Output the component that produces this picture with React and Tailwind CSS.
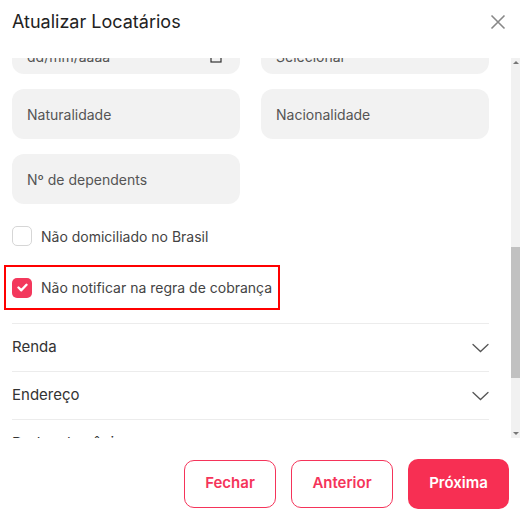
import React, {useLayoutEffect, useRef} from 'react';

const Field = ({placeholder, icon, low}) => (
  <div className={`h-[50px] rounded-xl bg-[#f2f2f2] flex justify-between px-[15px] text-[14px] text-[#555] ${low ? 'items-end pb-[7px]' : 'items-center'}`}>
    <span>{placeholder}</span>
    {icon}
  </div>
)

const CalendarIcon = () => (
  <svg width="12" height="12" viewBox="0 0 12 12" fill="none" stroke="#333" strokeWidth="1.2" className="mb-1 mr-[3px]">
    <rect x="1" y="1.5" width="10" height="9.5" />
    <path d="M1 4h10" />
  </svg>
)

const Chevron = () => (
  <svg width="17" height="10" viewBox="0 0 17 10" fill="none" stroke="#555" strokeWidth="1.3" strokeLinecap="round">
    <path d="M1 1.5l7.5 7 7.5-7" />
  </svg>
)

const Section = ({title}) => (
  <div className="h-[48px] border-t border-[#ececec] flex items-center justify-between text-[15px] text-[#333]">
    <span>{title}</span>
    <Chevron />
  </div>
)

const App = () => {
  const scrollRef = useRef(null)
  const anchorRef = useRef(null)

  useLayoutEffect(() => {
    if (scrollRef.current && anchorRef.current) {
      scrollRef.current.scrollTop = anchorRef.current.offsetTop - 31
    }
  }, [])

  const rows = [
    ['Tipo de pessoa', 'Código'],
    ['Nome completo', 'Nome social'],
    ['CPF', 'RG'],
    ['Órgão emissor', 'UF emissor'],
    ['Data de emissão', 'Sexo'],
    ['E-mail', 'Telefone'],
    ['Celular', 'Profissão'],
  ]

  return (
    <div className="w-[520px] h-[519px] bg-white flex flex-col font-['Inter',sans-serif]">
      <div className="h-[58px] flex items-start justify-between pl-3 pr-[14px] pt-[10px] shrink-0">
        <h2 className="text-[18px] leading-6 text-[#222]">Atualizar Locatários</h2>
        <button className="mt-[4px]">
          <svg width="16" height="16" viewBox="0 0 16 16" fill="none" stroke="#888" strokeWidth="1.6">
            <path d="M1.5 1.5l13 13M14.5 1.5l-13 13" />
          </svg>
        </button>
      </div>

      <div className="relative h-[380px] shrink-0">
        <div ref={scrollRef} className="h-full overflow-hidden pl-3 pr-[31px]">
          <div className="pt-4 flex flex-col gap-[15px]">
            {rows.map((r, i) => (
              <div key={i} className="grid grid-cols-2 gap-[21px]">
                <Field placeholder={r[0]} />
                <Field placeholder={r[1]} />
              </div>
            ))}
            <div className="grid grid-cols-2 gap-[21px]">
              <Field placeholder="dd/mm/aaaa" icon={<CalendarIcon />} low />
              <Field placeholder="Selecionar" low />
            </div>
            <div ref={anchorRef} className="grid grid-cols-2 gap-[21px]">
              <Field placeholder="Naturalidade" />
              <Field placeholder="Nacionalidade" />
            </div>
            <div className="grid grid-cols-2 gap-[21px]">
              <Field placeholder="Nº de dependents" />
            </div>
          </div>

          <label className="mt-[22px] flex items-center gap-[9px] text-[14px] text-[#444] h-5">
            <span className="w-5 h-5 rounded-[5px] border border-[#d6d6d6] bg-white"></span>
            Não domiciliado no Brasil
          </label>

          <div className="mt-[19px] -ml-2 w-[276px] h-[45px] border-2 border-[#ff0000] flex items-center pl-[6px]">
            <label className="flex items-center gap-[9px] text-[14px] text-[#444]">
              <span className="w-5 h-5 rounded-[5px] bg-[#f3385c] flex items-center justify-center">
                <svg width="11" height="9" viewBox="0 0 11 9" fill="none" stroke="white" strokeWidth="2.4" strokeLinecap="round" strokeLinejoin="round">
                  <path d="M1.5 4.5l2.8 2.8L9.5 1.8" />
                </svg>
              </span>
              Não notificar na regra de cobrança
            </label>
          </div>

          <div className="mt-[13px]">
            <Section title="Renda" />
            <Section title="Endereço" />
            <Section title="Dados do cônjuge" />
            <Section title="Contato" />
            <Section title="Documentos" />
          </div>
          <div className="h-[30px]"></div>
        </div>

        {/* scrollbar */}
        <div className="absolute right-0 top-0 bottom-0 w-[9px] bg-[#f1f1f1] flex flex-col">
          <div className="h-[9px] flex items-center justify-center">
            <div className="w-0 h-0 border-x-[3px] border-x-transparent border-b-[3px] border-b-[#777]"></div>
          </div>
          <div className="flex-1 flex flex-col">
            <div className="h-[180px]"></div>
            <div className="h-[131px] bg-[#c1c1c1]"></div>
          </div>
          <div className="h-[9px] flex items-center justify-center">
            <div className="w-0 h-0 border-x-[3px] border-x-transparent border-t-[3px] border-t-[#777]"></div>
          </div>
        </div>
      </div>

      <div className="flex-1 flex items-center justify-end gap-[15px] pr-[11px] pt-[10px]">
        <button className="w-[92px] h-12 rounded-[10px] border border-[#f5345a] text-[#f5345a] text-[15px] font-semibold">
          Fechar
        </button>
        <button className="w-[102px] h-12 rounded-[10px] border border-[#f5345a] text-[#f5345a] text-[15px] font-semibold">
          Anterior
        </button>
        <button className="w-[101px] h-[50px] rounded-[10px] bg-[#f72f53] text-white text-[15px] font-semibold">
          Próxima
        </button>
      </div>
    </div>
  );
};

export default App;
